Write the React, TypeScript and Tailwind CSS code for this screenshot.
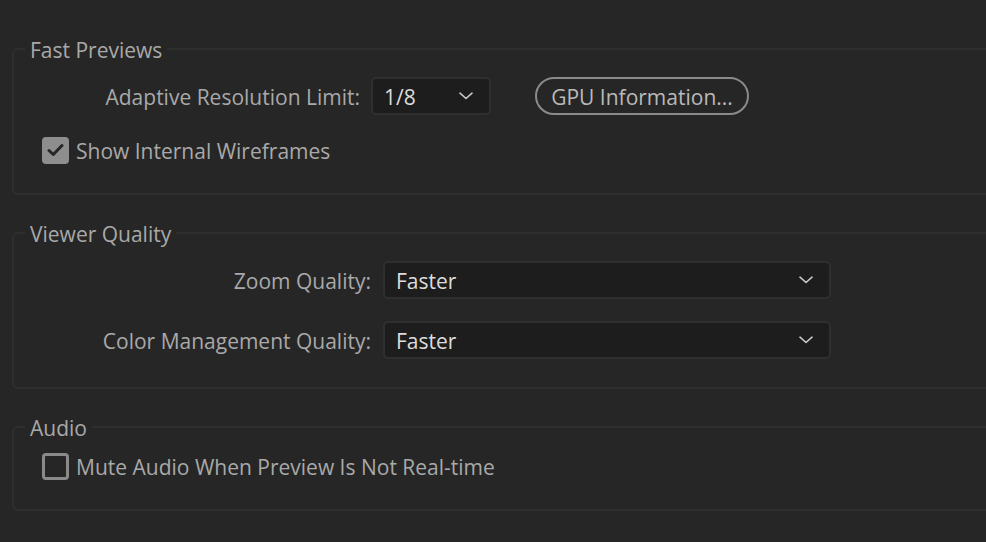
import React from "react";

const font = { fontFamily: "'Open Sans', Lato, sans-serif" };

function Chevron() {
  return (
    <svg width="14" height="8" viewBox="0 0 14 8" fill="none" className="shrink-0">
      <path d="M1 1.2 L7 6.5 L13 1.2" stroke="#c8c8c8" strokeWidth="1.6" strokeLinecap="round" strokeLinejoin="round" />
    </svg>
  );
}

function Select({ value, width }: { value: string; width: string }) {
  return (
    <div className={`${width} h-[38px] rounded-[5px] border-2 border-[#2f2f2f] bg-[#1d1d1d] flex items-center justify-between pl-[11px] pr-[16px]`}>
      <span className="pt-[2px] text-[21px] leading-[24px] text-[#dcdcdc]">{value}</span>
      <Chevron />
    </div>
  );
}

function Checkbox({ checked, label }: { checked?: boolean; label: string }) {
  return (
    <div className="flex items-center gap-[7px] h-[28px]">
      {checked ? (
        <div className="w-[27px] h-[27px] rounded-[4px] bg-[#8e8e8e] flex items-center justify-center">
          <svg width="17" height="14" viewBox="0 0 17 14" fill="none">
            <path d="M2 7.5 L6.3 11.5 L15 2.5" stroke="#262626" strokeWidth="3" strokeLinecap="round" strokeLinejoin="round" />
          </svg>
        </div>
      ) : (
        <div className="w-[27px] h-[27px] rounded-[4px] border-[3px] border-[#8a8a8a]" />
      )}
      <span className="pt-[2px] text-[21px] leading-[24px] text-[#a9a9a9]">{label}</span>
    </div>
  );
}

function Group({ title, className, children }: { title: string; className: string; children: React.ReactNode }) {
  return (
    <fieldset className={`border-2 border-[#2f2f2f] rounded-[6px] -mr-[10px] ${className}`}>
      <legend className="ml-[11px] px-[5px] pt-[2px] text-[21px] leading-[24px] text-[#a9a9a9]">{title}</legend>
      {children}
    </fieldset>
  );
}

export default function App() {
  return (
    <div style={font} className="w-[986px] h-[542px] overflow-hidden bg-[#262626] pl-[12px] pt-[36px] flex flex-col gap-[25px]">
      <Group title="Fast Previews" className="h-[159px]">
        <div className="pt-[15px] flex flex-col gap-[21px]">
          <div className="flex items-center h-[38px]">
            <span className="w-[346px] pt-[2px] text-right text-[21px] leading-[24px] text-[#a9a9a9]">Adaptive Resolution Limit:</span>
            <div className="ml-[11px]">
              <Select value="1/8" width="w-[120px]" />
            </div>
            <div className="ml-[44px] w-[214px] h-[38px] pt-[2px] rounded-full border-2 border-[#8a8a8a] flex items-center justify-center text-[21px] leading-[24px] text-[#b9b9b9]">
              GPU Information...
            </div>
          </div>
          <div className="pl-[28px]">
            <Checkbox checked label="Show Internal Wireframes" />
          </div>
        </div>
      </Group>

      <Group title="Viewer Quality" className="h-[169px]">
        <div className="pt-[15px] flex flex-col gap-[22px]">
          <div className="flex items-center h-[38px]">
            <span className="w-[357px] pt-[2px] text-right text-[21px] leading-[24px] text-[#a9a9a9]">Zoom Quality:</span>
            <div className="ml-[12px]">
              <Select value="Faster" width="w-[448px]" />
            </div>
          </div>
          <div className="flex items-center h-[38px]">
            <span className="w-[357px] pt-[2px] text-right text-[21px] leading-[24px] text-[#a9a9a9]">Color Management Quality:</span>
            <div className="ml-[12px]">
              <Select value="Faster" width="w-[448px]" />
            </div>
          </div>
        </div>
      </Group>

      <Group title="Audio" className="h-[97px]">
        <div className="pt-[12px] pl-[28px]">
          <Checkbox label="Mute Audio When Preview Is Not Real-time" />
        </div>
      </Group>
    </div>
  );
}
